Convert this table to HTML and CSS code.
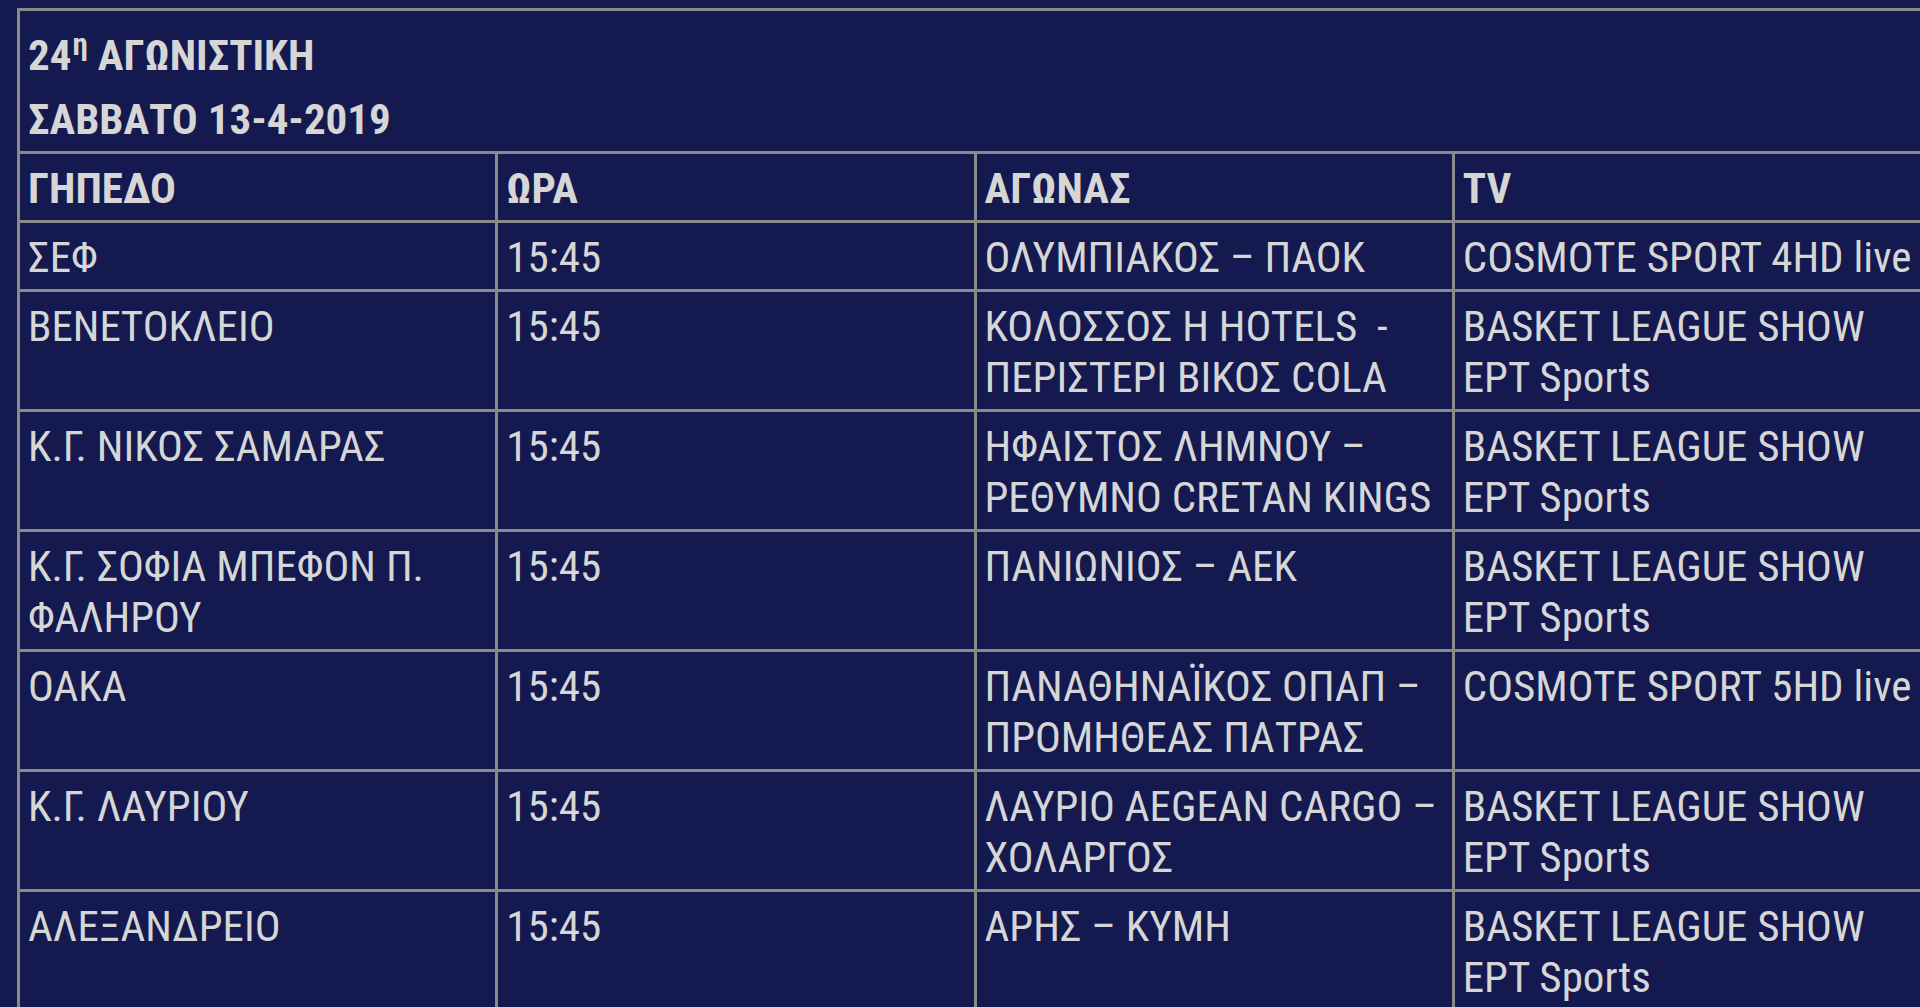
FILE: index.html
```html
<!DOCTYPE html>
<html lang="el">
<head>
<meta charset="utf-8">
<title>24η Αγωνιστική</title>
<link rel="stylesheet" href="styles.css">
</head>
<body>
<div class="page">
<table class="schedule">
  <colgroup><col class="c"><col class="c"><col class="c"><col class="c"></colgroup>
  <tr>
    <td class="title" colspan="4">
      <div class="title-line">24<sup>η</sup> ΑΓΩΝΙΣΤΙΚΗ</div>
      <div class="title-line">ΣΑΒΒΑΤΟ 13-4-2019</div>
    </td>
  </tr>
  <tr class="head">
    <td>ΓΗΠΕΔΟ</td><td>ΩΡΑ</td><td>ΑΓΩΝΑΣ</td><td>TV</td>
  </tr>
  <tr>
    <td>ΣΕΦ</td><td>15:45</td><td>ΟΛΥΜΠΙΑΚΟΣ – ΠΑΟΚ</td><td>COSMOTE SPORT 4HD live</td>
  </tr>
  <tr>
    <td>ΒΕΝΕΤΟΚΛΕΙΟ</td><td>15:45</td><td>ΚΟΛΟΣΣΟΣ Η HOTELS &nbsp;-<br>ΠΕΡΙΣΤΕΡΙ ΒΙΚΟΣ COLA</td><td>BASKET LEAGUE SHOW<br>ΕΡΤ Sports</td>
  </tr>
  <tr>
    <td>Κ.Γ. ΝΙΚΟΣ ΣΑΜΑΡΑΣ</td><td>15:45</td><td>ΗΦΑΙΣΤΟΣ ΛΗΜΝΟΥ –<br>ΡΕΘΥΜΝΟ CRETAN KINGS</td><td>BASKET LEAGUE SHOW<br>ΕΡΤ Sports</td>
  </tr>
  <tr>
    <td>Κ.Γ. ΣΟΦΙΑ ΜΠΕΦΟΝ Π.<br>ΦΑΛΗΡΟΥ</td><td>15:45</td><td>ΠΑΝΙΩΝΙΟΣ – ΑΕΚ</td><td>BASKET LEAGUE SHOW<br>ΕΡΤ Sports</td>
  </tr>
  <tr>
    <td>ΟΑΚΑ</td><td>15:45</td><td>ΠΑΝΑΘΗΝΑΪΚΟΣ ΟΠΑΠ –<br>ΠΡΟΜΗΘΕΑΣ ΠΑΤΡΑΣ</td><td>COSMOTE SPORT 5HD live</td>
  </tr>
  <tr>
    <td>Κ.Γ. ΛΑΥΡΙΟΥ</td><td>15:45</td><td>ΛΑΥΡΙΟ AEGEAN CARGO –<br>ΧΟΛΑΡΓΟΣ</td><td>BASKET LEAGUE SHOW<br>ΕΡΤ Sports</td>
  </tr>
  <tr>
    <td>ΑΛΕΞΑΝΔΡΕΙΟ</td><td>15:45</td><td>ΑΡΗΣ – ΚΥΜΗ</td><td>BASKET LEAGUE SHOW<br>ΕΡΤ Sports</td>
  </tr>
</table>
</div>
</body>
</html>
```
FILE: styles.css
```css
html, body {
  margin: 0;
  padding: 0;
  overflow: hidden;
  background: #141a50;
}
.page {
  padding: 8px 0 0 17px;
  width: 2000px;
}
.schedule {
  width: 1916px;
  table-layout: fixed;
  border-collapse: collapse;
  border: 3px solid #8a8a8a;
  font-family: "Roboto Condensed", "Liberation Sans Narrow", Roboto, sans-serif;
  font-stretch: condensed;
  font-size: 43px;
  line-height: 51px;
  color: #d6d6d6;
}
.schedule td {
  border: 3px solid #8a8a8a;
  padding: 9px 8px 6px;
  vertical-align: top;
  white-space: nowrap;
  overflow: hidden;
}
.schedule td.title {
  padding: 12px 8px 0;
  font-weight: bold;
}
.title-line {
  line-height: 64px;
}
.title-line sup {
  font-size: 0.72em;
  line-height: 0;
  vertical-align: 0.5em;
  margin-left: 1px;
}
.head td {
  font-weight: bold;
}
```
